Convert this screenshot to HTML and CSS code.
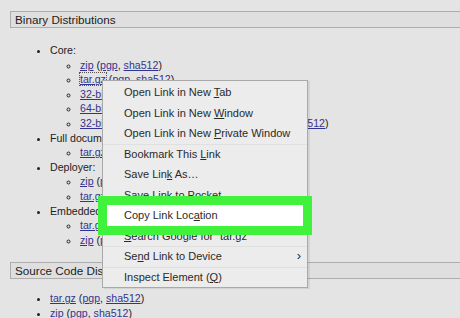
FILE: index.html
```html
<!DOCTYPE html>
<html lang="en">
<head>
  <meta charset="UTF-8">
  <meta name="viewport" content="width=device-width, initial-scale=1.0">
  <title>Tomcat Downloads</title>
  <link rel="stylesheet" href="styles.css">
</head>
<body>
  <h3 class="section">Binary Distributions</h3>
  <ul class="dist">
    <li>Core:
      <ul>
        <li><a href="#">zip</a> (<a href="#">pgp</a>, <a href="#">sha512</a>)</li>
        <li><a href="#" class="focused">tar.gz</a> (<a href="#">pgp</a>, <a href="#">sha512</a>)</li>
        <li><a href="#">32-bit Windows zip</a> (<a href="#">pgp</a>, <a href="#">sha512</a>)</li>
        <li><a href="#">64-bit Windows zip</a> (<a href="#">pgp</a>, <a href="#">sha512</a>)</li>
        <li><a href="#">32-bit/64-bit Windows Service Installer</a> (<a href="#">pgp</a>, <a href="#">sha512</a>)</li>
      </ul>
    </li>
    <li>Full documentation:
      <ul>
        <li><a href="#">tar.gz</a> (<a href="#">pgp</a>, <a href="#">sha512</a>)</li>
      </ul>
    </li>
    <li>Deployer:
      <ul>
        <li><a href="#">zip</a> (<a href="#">pgp</a>, <a href="#">sha512</a>)</li>
        <li><a href="#">tar.gz</a> (<a href="#">pgp</a>, <a href="#">sha512</a>)</li>
      </ul>
    </li>
    <li>Embedded:
      <ul>
        <li><a href="#">tar.gz</a> (<a href="#">pgp</a>, <a href="#">sha512</a>)</li>
        <li><a href="#">zip</a> (<a href="#">pgp</a>, <a href="#">sha512</a>)</li>
      </ul>
    </li>
  </ul>

  <h3 class="section second">Source Code Distributions</h3>
  <ul class="dist source">
    <li><a href="#">tar.gz</a> (<a href="#">pgp</a>, <a href="#">sha512</a>)</li>
    <li><a href="#">zip</a> (<a href="#">pgp</a>, <a href="#">sha512</a>)</li>
  </ul>

  <!-- context menu opened on the tar.gz link -->
  <div class="context-menu">
    <div class="menu-item">Open Link in New <u>T</u>ab</div>
    <div class="menu-item">Open Link in New <u>W</u>indow</div>
    <div class="menu-item">Open Link in New <u>P</u>rivate Window</div>
    <div class="menu-item group">Bookmark This <u>L</u>ink</div>
    <div class="menu-item">Save Lin<u>k</u> As…</div>
    <div class="menu-item">Save Link to P<u>o</u>cket</div>
    <div class="menu-item copy">Copy Link Loc<u>a</u>tion</div>
    <div class="menu-item group"><u>S</u>earch Google for “tar.gz”</div>
    <div class="menu-item group">Se<u>n</u>d Link to Device<span class="submenu-arrow">›</span></div>
    <div class="menu-item group">Inspect Element (<u>Q</u>)</div>
  </div>
</body>
</html>
```

FILE: styles.css
```css
html {
  overflow: hidden;
}
body {
  margin: 0;
  padding-top: 11px;
  background-color: #e4e4e4;
  font-family: "Liberation Sans", Arial, sans-serif;
  color: #222;
}
a {
  color: #34348f;
  text-decoration: underline;
}
.section {
  margin: 0 0 0 10px;
  padding-left: 4px;
  height: 15px;
  line-height: 15px;
  border: 1px solid #adadad;
  border-right: none;
  background: #dfdfdf;
  font-size: 11.7px;
  font-weight: normal;
}
.section.second {
  margin-top: 15px;
}
.dist {
  margin: 15px 0 0;
  padding-left: 50px;
  list-style: disc;
  font-size: 10.6px;
  line-height: 14.6px;
}
.dist ul {
  margin: 0;
  padding-left: 30px;
  list-style: circle;
}
.dist.source {
  margin-top: 12px;
}
.focused {
  outline: 1px dotted #555;
  outline-offset: 0;
}
.context-menu {
  position: absolute;
  left: 102px;
  top: 80px;
  width: 204px;
  padding-top: 1px;
  background: #ececec;
  border: 1px solid #a9a9a9;
  box-shadow: 2px 1px 0 rgba(0,0,0,0.07);
  font-size: 11px;
  color: #2a2a2a;
}
.menu-item {
  height: 20.5px;
  line-height: 20.5px;
  padding-left: 21px;
  white-space: nowrap;
}
.menu-item.group {
  box-shadow: inset 0 1px 0 #e0e0e0;
}
.menu-item.copy {
  margin: 0 4px;
  padding-left: 17px;
  background: #fff;
  outline: 9px solid #40f23c;
}
.submenu-arrow {
  float: right;
  margin-right: 6px;
  font-size: 13px;
}
```
